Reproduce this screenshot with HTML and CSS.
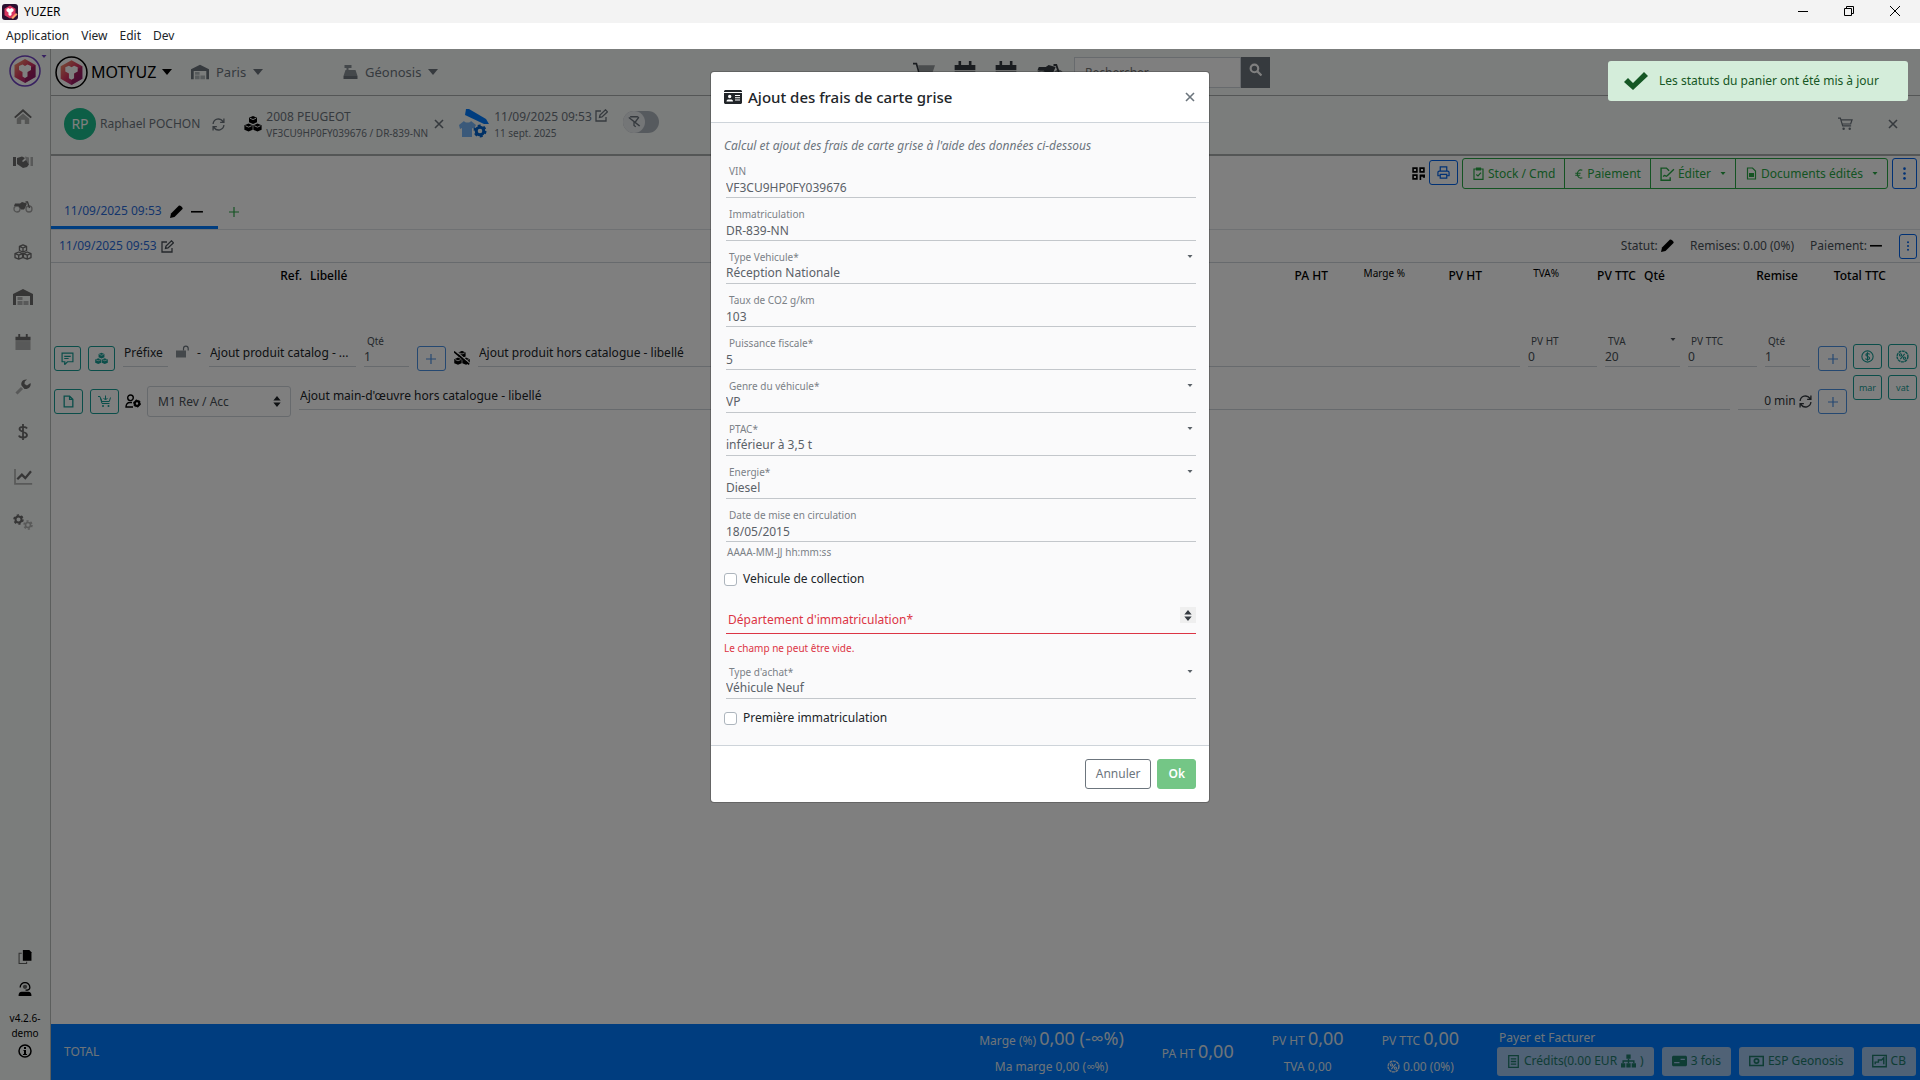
FILE: index.html
```html
<!DOCTYPE html>
<html lang="fr">

<head>
    <meta charset="UTF-8">
    <meta name="viewport" content="width=device-width, initial-scale=1.0">
    <title>YUZER</title>
    <link rel="stylesheet" href="styles.css">
</head>

<body>
    <!-- icon sprite -->
    <svg class="sprite" aria-hidden="true">
        <defs>
            <linearGradient id="hex" x1="0" y1="0" x2="1" y2="1">
                <stop offset="0" stop-color="#f9a26c" />
                <stop offset=".5" stop-color="#d8345f" />
                <stop offset="1" stop-color="#7a1fa0" />
            </linearGradient>
        </defs>
        <symbol id="i-logo" viewBox="0 0 32 32">
            <circle cx="16" cy="16" r="15" fill="#fff" stroke="currentColor" stroke-width="1.5" />
            <path d="M16 4l10.500 6v12L16 28 5.500 22v-12z" fill="url(#hex)" />
            <path d="M16 28V17l10.500-7v12z" fill="#8d1450" opacity=".6" />
            <path d="M10 11l3.500-1.500 2.500 1.500 2.500-1.500L22 11v4l-3.500 2v4.500L16 23l-2.500-1.500V17L10 15z" fill="#fff" />
        </symbol>
        <symbol id="i-app" viewBox="0 0 16 16">
            <rect width="16" height="16" rx="3" fill="#2a1030" />
            <path d="M8 1.500l5.500 3.200v6.500L8 14.500l-5.500-3.300V4.700z" fill="#d8345f" />
            <path d="M4.500 5l2-1L8 5l1.500-1 2 1v2L9.500 8.500V11L8 12l-1.500-1V8.500L4.500 7z" fill="#fff" />
            <path d="M9 14l5-5 1.500 1.500L11 15z" fill="#f9a26c" />
        </symbol>
        <symbol id="i-caret" viewBox="0 0 10 6"><path d="M0 0h10L5 6z" /></symbol>
        <symbol id="i-home" viewBox="0 0 20 18"><path d="M10 0l10 9-1.500 1.500L10 3 1.500 10.500 0 9z" /><path d="M10 5l7 6v6h-5v-5H8v5H3v-6z" opacity=".55" /></symbol>
        <symbol id="i-hands" viewBox="0 0 20 14"><path d="M0 2h3v9H0zM4 3l5-1.500 3 1.500-3 3 1 1 3-2 3 4.500-2 2.500-4 1-6-4z" /><path d="M12 1.500l4 1v7l-3-4zM17.500 2H20v9h-2.500z" opacity=".5" /></symbol>
        <symbol id="i-moto" viewBox="0 0 20 12"><g fill="none" stroke="currentColor" stroke-width="1.300"><circle cx="4" cy="8" r="3" opacity=".6" /><circle cx="16" cy="8" r="3" opacity=".6" /><path d="M12.500 1h2l2 6" /></g><path d="M2 2.500h5l2-1.500 5 1.500L12 7l-1 1.500H8L5.500 5H1z" /></symbol>
        <symbol id="i-boxes" viewBox="0 0 20 18"><g fill="none" stroke="currentColor" stroke-width="1.500" stroke-linejoin="round"><path d="M10 1l4 1.700v4.600L10 9 6 7.300V2.700zM6 2.700l4 1.800 4-1.800M10 4.500V9" /><path d="M5.200 9l4.300 1.700v4.600l-4.300 1.700L1 15.300v-4.600zM1 10.700l4.200 1.800 4.300-1.800M5.200 12.500V17" /><path d="M14.800 9l4.200 1.700v4.600L14.800 17l-4.300-1.700v-4.600zM10.500 10.700l4.300 1.800 4.200-1.800M14.800 12.500V17" /></g></symbol>
        <symbol id="i-cubes" viewBox="0 0 20 18"><path d="M10 0l4.500 2v5L10 9 5.500 7V2z" /><path d="M5 8.500l4.600 2v5L5 17.500l-4.700-2v-5z" /><path d="M15 8.500l4.700 2v5l-4.700 2-4.600-2v-5z" /><path d="M6.500 2.500L10 4l3.500-1.500M1.500 11L5 12.500 8.500 11M11.500 11l3.500 1.500 3.500-1.500" fill="none" stroke="#fff" /></symbol>
        <symbol id="i-cubes-off" viewBox="0 0 20 18"><use href="#i-cubes" width="20" height="18" /><path d="M2 0l18 16" stroke="#fff" stroke-width="1.500" /><path d="M0 1l19 16" stroke="currentColor" stroke-width="2" /></symbol>
        <symbol id="i-garage" viewBox="0 0 20 16"><path d="M0 16V5l10-5 10 5v11h-3V7H3v9z" /><path d="M4.500 8h5v3h-5zM4.500 12h5v4h-5zM10.500 12h5v4h-5z" opacity=".5" /></symbol>
        <symbol id="i-calendar" viewBox="0 0 16 17"><path d="M0 7V3h3V0h2v3h6V0h2v3h3v4z" /><path d="M0 7.500h16V17H0z" opacity=".5" /></symbol>
        <symbol id="i-wrench" viewBox="0 0 16 16"><path d="M7 9L1.500 14.500" fill="none" stroke="currentColor" stroke-width="3" opacity=".5" /><path d="M15.500 4L12 6.500 9.500 5l.3-2.500L12 .5C8 0 5.500 3 6.500 6.500L9.500 10c4 .5 7-2.500 6-6z" /></symbol>
        <symbol id="i-dollar" viewBox="0 0 12 16"><path d="M10 4.500C9 2.500 2.500 2 2.500 5S10 7.500 10 11s-7.500 3-8 .5M6 0v16" fill="none" stroke="currentColor" stroke-width="1.800" /></symbol>
        <symbol id="i-chart" viewBox="0 0 16 14"><path d="M1 0v13h15" fill="none" stroke="currentColor" stroke-width="1.500" opacity=".5" /><path d="M3 9l4-4 3 3 5-6" fill="none" stroke="currentColor" stroke-width="2" /></symbol>
        <symbol id="i-gears" viewBox="0 0 20 16"><g fill="none" stroke="currentColor"><circle cx="5.500" cy="5.500" r="3" stroke-width="2" /><circle cx="5.500" cy="5.500" r="4.500" stroke-width="1.500" stroke-dasharray="2.350" /><g opacity=".5"><circle cx="15" cy="11" r="2.500" stroke-width="1.600" /><circle cx="15" cy="11" r="4" stroke-width="1.500" stroke-dasharray="2.100" /></g></g></symbol>
        <symbol id="i-copy" viewBox="0 0 12 13"><path d="M4 0h6l2 2v8H4z" /><path d="M3 3H.5v9.500h7V11" fill="none" stroke="currentColor" opacity=".6" /></symbol>
        <symbol id="i-agent" viewBox="0 0 12 13"><circle cx="6" cy="4.500" r="2" opacity=".6" /><path d="M1.500 5a4.500 4.500 0 1 1 9 0c0 2-2 2.500-4 2.500" fill="none" stroke="currentColor" stroke-width="1.200" /><path d="M0 13c0-3 1-4 3-4h6c2 0 3 1 3 4z" /></symbol>
        <symbol id="i-info" viewBox="0 0 14 14"><circle cx="7" cy="7" r="6" fill="none" stroke="currentColor" stroke-width="1.500" /><path d="M6 3h2v2H6zM5.500 6H8v4h1v1H5v-1h1V7h-.5z" /></symbol>
        <symbol id="i-register" viewBox="0 0 14 14"><path d="M1 0h7v3H5v2h7l2 6H0l2-6h1V3H1z" opacity=".8" /><path d="M0 11h14v3H0z" /></symbol>
        <symbol id="i-cart" viewBox="0 0 16 14"><path d="M0 .8h2.500L5 9h9M3 2.500h12L13.500 7H4.500" fill="none" stroke="currentColor" stroke-width="1.300" /><circle cx="6" cy="12" r="1.300" /><circle cx="12.500" cy="12" r="1.300" /></symbol>
        <symbol id="i-cart-big" viewBox="0 0 26 22"><path d="M0 1h4l4 14h15" fill="none" stroke="currentColor" stroke-width="2" /><path d="M6 3h20l-3 9H8z" opacity=".5" /><circle cx="10" cy="19" r="2" /><circle cx="21" cy="19" r="2" /></symbol>
        <symbol id="i-refresh" viewBox="0 0 12 12"><path d="M1 5.500A5 5 0 0 1 10 3l1 1M11 6.500A5 5 0 0 1 2 9L1 8M11 .5V4H7.500M1 11.500V8h3.500" fill="none" stroke="currentColor" stroke-width="1.200" /></symbol>
        <symbol id="i-edit" viewBox="0 0 13 13"><path d="M6 2H1v10h10V8M4.500 8.500l.5-2.500L10.500.8l2 2L7 8z" fill="none" stroke="currentColor" stroke-width="1.300" /></symbol>
        <symbol id="i-pen" viewBox="0 0 13 13"><path d="M0 13l1-4.500L9 .6C10 0 13.500 3 12.500 4L4.500 12z" /></symbol>
        <symbol id="i-minus" viewBox="0 0 12 12"><path d="M0 5.500h11V7H0z" /></symbol>
        <symbol id="i-plus" viewBox="0 0 12 12"><path d="M5.300 0h1.400v5.300H12v1.400H6.700V12H5.300V6.700H0V5.300h5.300z" /></symbol>
        <symbol id="i-x" viewBox="0 0 10 10"><path d="M1 1l8 8M9 1L1 9" fill="none" stroke="currentColor" stroke-width="1.600" /></symbol>
        <symbol id="i-work" viewBox="0 0 32 30"><path d="M1 16l5-4c1 2 6 2 7 0l5 4-2 4-2-1v9H4v-9l-2 1z" fill="#74b3f5" /><path d="M8 0l3 0 17 10 3 5-5 0L7 6z" fill="#007bff" /><circle cx="22" cy="22" r="3.800" fill="none" stroke="#0062cc" stroke-width="3" /><circle cx="22" cy="22" r="5.500" fill="none" stroke="#0062cc" stroke-width="2" stroke-dasharray="2.880" /></symbol>
        <symbol id="i-filter-off" viewBox="0 0 16 14"><path d="M1 1l14 11M3.500 1H14L9.500 7M8 7v4l2 1.500" fill="none" stroke="currentColor" stroke-width="1.500" /></symbol>
        <symbol id="i-search" viewBox="0 0 12 12"><circle cx="5" cy="5" r="3.500" fill="none" stroke="currentColor" stroke-width="2" /><path d="M7.500 7.500l4 4" stroke="currentColor" stroke-width="2" /></symbol>
        <symbol id="i-check" viewBox="0 0 24 18"><path d="M0 10l4-4 5 5L20 0l4 4L9 18z" /></symbol>
        <symbol id="i-qr" viewBox="0 0 12 12"><path d="M1 1h3.500v3.500H1zM7.500 1H11v3.500H7.500zM1 7.500h3.500V11H1z" fill="none" stroke="currentColor" stroke-width="1.500" /><path d="M7 7h5v3h-2v-1H8.500v3H7z" /></symbol>
        <symbol id="i-print" viewBox="0 0 14 14"><path d="M3.500 5V1h7v4M3.500 10.500H1V7c0-1 .5-1.500 1.500-1.500h9c1 0 1.500.5 1.500 1.500v3.500h-2.500M3.500 9h7v4h-7z" fill="none" stroke="currentColor" stroke-width="1.300" /></symbol>
        <symbol id="i-clip" viewBox="0 0 11 13"><path d="M1 2h9v10.300H1zM3.500 1h4v2h-4zM3.300 7.500L5 9l3-3.300" fill="none" stroke="currentColor" stroke-width="1.200" /></symbol>
        <symbol id="i-euro" viewBox="0 0 9 12"><path d="M8.500 1.500C5 0 2.500 2.500 2.500 6s2.500 6 6 4.500M0 5h6.500M0 7.500h6" fill="none" stroke="currentColor" stroke-width="1.300" /></symbol>
        <symbol id="i-sign" viewBox="0 0 14 13"><path d="M9.500 9.500v2.800H1V1h5l2.500 2.500M3 9c2-3 2 1 4-1l6-6" fill="none" stroke="currentColor" stroke-width="1.300" /></symbol>
        <symbol id="i-doc" viewBox="0 0 10 13"><path d="M1 1h5l3 3v8H1z" fill="none" stroke="currentColor" stroke-width="1.200" /><path d="M2.500 6h5v4h-5z" /></symbol>
        <symbol id="i-dots" viewBox="0 0 4 12"><circle cx="2" cy="1.500" r="1.200" /><circle cx="2" cy="6" r="1.200" /><circle cx="2" cy="10.500" r="1.200" /></symbol>
        <symbol id="i-note" viewBox="0 0 12 12"><path d="M1 1h10v8H6l-2.500 2.500V9H1zM3 4h6M3 6h4" fill="none" stroke="currentColor" stroke-width="1.100" /></symbol>
        <symbol id="i-lock" viewBox="0 0 13 12"><path d="M0 5h10v7H0z" opacity=".8" /><path d="M7.500 5V3a2.300 2.300 0 0 1 4.700 0v2" fill="none" stroke="currentColor" stroke-width="1.200" /></symbol>
        <symbol id="i-file" viewBox="0 0 10 12"><path d="M1 1h5l3 3v7H1zM6 1v3h3" fill="none" stroke="currentColor" stroke-width="1.200" /></symbol>
        <symbol id="i-cart-plus" viewBox="0 0 13 12"><path d="M0 1h2l2 7h7.500M3 3l.7 3h7.600L12.500 2M7.500 0v4M5.500 2.500l2 2 2-2" fill="none" stroke="currentColor" /><circle cx="5" cy="10.500" r="1" /><circle cx="10.500" cy="10.500" r="1" /></symbol>
        <symbol id="i-user" viewBox="0 0 16 14"><circle cx="5.500" cy="3.800" r="2.800" fill="none" stroke="currentColor" stroke-width="1.400" /><path d="M8 13H1c0-3 1.500-4.500 4-4.500h2" fill="none" stroke="currentColor" stroke-width="1.400" /><circle cx="12" cy="9.500" r="2.300" fill="none" stroke="currentColor" stroke-width="2.200" /><circle cx="12" cy="9.500" r="3.500" fill="none" stroke="currentColor" stroke-dasharray="1.800" /></symbol>
        <symbol id="i-sort" viewBox="0 0 8 12"><path d="M4 0l4 5H0zM0 7h8l-4 5z" /></symbol>
        <symbol id="i-coin" viewBox="0 0 12 12"><circle cx="6" cy="6" r="5.200" fill="none" stroke="currentColor" /><path d="M8 4C7 3 4.500 3 4.500 4.500S8 6 8 7.500 5 9 4 8M6 2v8" fill="none" stroke="currentColor" /></symbol>
        <symbol id="i-badge" viewBox="0 0 12 12"><circle cx="6" cy="6" r="5" fill="none" stroke="currentColor" stroke-width="1.300" stroke-dasharray="2.600 .6" /><path d="M4 8.500l4-5" stroke="currentColor" /><circle cx="4.200" cy="4.500" r="1" fill="none" stroke="currentColor" /><circle cx="7.800" cy="7.500" r="1" fill="none" stroke="currentColor" /></symbol>
        <symbol id="i-bill" viewBox="0 0 10 12"><path d="M.6.6h8.800v10.800H.6zM2.500 3.500h5M2.500 6h5M2.500 8.500h5" fill="none" stroke="currentColor" stroke-width="1.200" /></symbol>
        <symbol id="i-tree" viewBox="0 0 14 12"><path d="M5 0h4v4H5zM0 8h4v4H0zM5 8h4v4H5zM10 8h4v4h-4z" /><path d="M7 4v4M2 8V6h10v2" fill="none" stroke="currentColor" stroke-width="1.300" /></symbol>
        <symbol id="i-card" viewBox="0 0 14 10"><path fill-rule="evenodd" d="M1 0h12l1 1v8l-1 1H1L0 9V1zM8 3v1h4V3zM2 6v1h5V6z" /></symbol>
        <symbol id="i-cash" viewBox="0 0 14 10"><path d="M.7.7h12.600v8.600H.7z" fill="none" stroke="currentColor" stroke-width="1.400" /><circle cx="7" cy="5" r="2" fill="none" stroke="currentColor" stroke-width="1.600" /></symbol>
        <symbol id="i-cb" viewBox="0 0 14 12"><path d="M.7.7h12.600v10.600H.7zM3 9V7h3V5h3l2-2v6" fill="none" stroke="currentColor" stroke-width="1.300" /></symbol>
        <symbol id="i-id" viewBox="0 0 18 14"><path fill-rule="evenodd" d="M1 0h16l1 1v1H0V1zM0 3h18v10l-1 1H1l-1-1zM4 6.500a1.700 1.700 0 1 0 3.400 0 1.700 1.700 0 0 0-3.400 0zM2.500 11.500h6.500c0-1.500-1-2-2-2H4.500c-1 0-2 .5-2 2zM11 5v1h5V5zM11 7.300v1h5v-1zM11 9.500v1h5v-1z" /></symbol>
    </svg>

    <div class="titlebar">
        <svg class="app-icon"><use href="#i-app" /></svg>
        <span>YUZER</span>
        <div class="win-buttons">
            <button aria-label="Réduire"><svg viewBox="0 0 10 10"><path d="M0 5.500h10" /></svg></button>
            <button aria-label="Restaurer"><svg viewBox="0 0 10 10"><path d="M.5 2.500h7v7h-7zM2.500 2.500v-2h7v7h-2" /></svg></button>
            <button aria-label="Fermer"><svg viewBox="0 0 10 10"><path d="M0 0l10 10M10 0L0 10" /></svg></button>
        </div>
    </div>
    <nav class="menubar">
        <a href="#">Application</a>
        <a href="#">View</a>
        <a href="#">Edit</a>
        <a href="#">Dev</a>
    </nav>

    <div class="app">
        <aside class="sidebar">
            <a href="#" class="side-logo"><svg><use href="#i-logo" /></svg><svg class="caret tiny"><use href="#i-caret" /></svg></a>
            <nav>
                <a href="#" aria-label="Accueil"><svg><use href="#i-home" /></svg></a>
                <a href="#" aria-label="Clients"><svg><use href="#i-hands" /></svg></a>
                <a href="#" aria-label="Véhicules"><svg><use href="#i-moto" /></svg></a>
                <a href="#" aria-label="Produits"><svg><use href="#i-boxes" /></svg></a>
                <a href="#" aria-label="Stock"><svg><use href="#i-garage" /></svg></a>
                <a href="#" aria-label="Agenda"><svg><use href="#i-calendar" /></svg></a>
                <a href="#" aria-label="Atelier"><svg><use href="#i-wrench" /></svg></a>
                <a href="#" aria-label="Ventes"><svg><use href="#i-dollar" /></svg></a>
                <a href="#" aria-label="Statistiques"><svg><use href="#i-chart" /></svg></a>
                <a href="#" aria-label="Réglages"><svg><use href="#i-gears" /></svg></a>
            </nav>
            <div class="side-bottom">
                <svg><use href="#i-copy" /></svg>
                <svg><use href="#i-agent" /></svg>
                <span>v4.2.6-demo</span>
                <svg><use href="#i-info" /></svg>
            </div>
        </aside>

        <div class="main">
            <header class="topbar">
                <a href="#" class="brand"><svg class="logo"><use href="#i-logo" /></svg>MOTYUZ<svg class="caret"><use href="#i-caret" /></svg></a>
                <a href="#" class="place"><svg class="ic-l"><use href="#i-garage" /></svg>Paris<svg class="caret"><use href="#i-caret" /></svg></a>
                <a href="#" class="till"><svg class="ic-m"><use href="#i-register" /></svg>Géonosis<svg class="caret"><use href="#i-caret" /></svg></a>
                <div class="quick">
                    <svg><use href="#i-cart-big" /></svg>
                    <svg><use href="#i-calendar" /></svg>
                    <svg><use href="#i-calendar" /></svg>
                    <svg class="wide"><use href="#i-moto" /></svg>
                </div>
                <form class="search">
                    <input type="text" aria-label="Rechercher" placeholder="Rechercher">
                    <button type="button" aria-label="Rechercher"><svg class="ic"><use href="#i-search" /></svg></button>
                </form>
                <svg class="account"><use href="#i-info" /></svg>
            </header>

            <section class="context">
                <span class="avatar">RP</span>
                <span class="client">Raphael POCHON</span>
                <svg class="ic refresh"><use href="#i-refresh" /></svg>
                <svg class="ic-l black"><use href="#i-cubes" /></svg>
                <div class="stack">
                    <span>2008 PEUGEOT</span>
                    <small>VF3CU9HP0FY039676 / DR-839-NN</small>
                </div>
                <button class="plain vehicle-x" aria-label="Retirer le véhicule"><svg class="ic-s"><use href="#i-x" /></svg></button>
                <svg class="work"><use href="#i-work" /></svg>
                <div class="stack">
                    <span>11/09/2025 09:53 <svg class="ic"><use href="#i-edit" /></svg></span>
                    <small>11 sept. 2025</small>
                </div>
                <label class="switch"><input type="checkbox" aria-label="Filtrer"><span><svg class="ic"><use href="#i-filter-off" /></svg></span></label>
                <div class="context-end">
                    <button class="plain" aria-label="Panier"><svg class="ic-m"><use href="#i-cart" /></svg></button>
                    <button class="plain" aria-label="Fermer"><svg class="ic-s"><use href="#i-x" /></svg></button>
                </div>
            </section>

            <section class="tabs">
                <div class="tab active"><a href="#">11/09/2025 09:53</a><svg class="ic"><use href="#i-pen" /></svg><svg class="ic"><use href="#i-minus" /></svg></div>
                <button class="plain add-tab" aria-label="Ajouter"><svg class="ic-s"><use href="#i-plus" /></svg></button>
                <div class="tools">
                    <svg class="ic black"><use href="#i-qr" /></svg>
                    <button class="btn-line blue small" aria-label="Imprimer"><svg class="ic"><use href="#i-print" /></svg></button>
                    <div class="group">
                        <button><svg class="ic"><use href="#i-clip" /></svg>Stock / Cmd</button>
                        <button><svg class="ic-s"><use href="#i-euro" /></svg>Paiement</button>
                        <button><svg class="ic-m"><use href="#i-sign" /></svg>Éditer<svg class="caret tiny"><use href="#i-caret" /></svg></button>
                        <button><svg class="ic"><use href="#i-doc" /></svg>Documents édités<svg class="caret tiny"><use href="#i-caret" /></svg></button>
                    </div>
                    <button class="btn-line blue tall" aria-label="Plus"><svg class="ic"><use href="#i-dots" /></svg></button>
                </div>
            </section>

            <section class="docbar">
                <a href="#">11/09/2025 09:53</a>
                <svg class="ic"><use href="#i-edit" /></svg>
                <div class="doc-state">
                    <span>Statut: <svg class="ic black"><use href="#i-pen" /></svg></span>
                    <span>Remises: 0.00 (0%)</span>
                    <span>Paiement: <svg class="ic black"><use href="#i-minus" /></svg></span>
                    <button class="btn-line blue narrow" aria-label="Plus"><svg class="ic-s"><use href="#i-dots" /></svg></button>
                </div>
            </section>

            <table class="lines-head">
                <colgroup>
                    <col class="c-ref"><col><col class="c-num"><col class="c-num"><col class="c-num"><col class="c-num"><col class="c-num"><col class="c-qty"><col class="c-num"><col class="c-total"><col class="c-end">
                </colgroup>
                <thead>
                    <tr>
                        <th>Ref.</th>
                        <th class="left">Libellé</th>
                        <th>PA HT</th>
                        <th class="mini">Marge %</th>
                        <th>PV HT</th>
                        <th class="mini">TVA%</th>
                        <th>PV TTC</th>
                        <th class="left">Qté</th>
                        <th>Remise</th>
                        <th>Total TTC</th>
                        <th></th>
                    </tr>
                </thead>
            </table>

            <section class="lines">
                <div class="rows">
                    <div class="row">
                        <button class="btn-line teal slim" aria-label="Commentaire"><svg class="ic"><use href="#i-note" /></svg></button>
                        <button class="btn-line teal slim" aria-label="Lot"><svg class="ic"><use href="#i-cubes" /></svg></button>
                        <input class="cell prefix" type="text" aria-label="Préfixe" placeholder="Préfixe">
                        <svg class="ic lock"><use href="#i-lock" /></svg>
                        <span class="dash">-</span>
                        <input class="cell catalog" type="text" aria-label="Ajout produit catalogue" placeholder="Ajout produit catalog - ...">
                        <div class="mini-field w-s"><label for="q1">Qté</label><input id="q1" type="text" value="1"></div>
                        <button class="btn-line sky" aria-label="Ajouter"><svg class="ic-s"><use href="#i-plus" /></svg></button>
                        <svg class="ic-l black"><use href="#i-cubes-off" /></svg>
                        <input class="cell grow" type="text" aria-label="Libellé produit" placeholder="Ajout produit hors catalogue - libellé">
                        <div class="mini-field w-m"><label for="pvht">PV HT</label><input id="pvht" type="text" value="0"></div>
                        <div class="mini-field w-l"><label for="tva">TVA</label><select id="tva"><option>20</option></select><svg class="caret tiny"><use href="#i-caret" /></svg></div>
                        <div class="mini-field w-m"><label for="pvttc">PV TTC</label><input id="pvttc" type="text" value="0"></div>
                        <div class="mini-field w-s"><label for="q2">Qté</label><input id="q2" type="text" value="1"></div>
                        <button class="btn-line sky" aria-label="Ajouter"><svg class="ic-s"><use href="#i-plus" /></svg></button>
                    </div>
                    <div class="row">
                        <button class="btn-line teal" aria-label="Document"><svg class="ic"><use href="#i-file" /></svg></button>
                        <button class="btn-line teal" aria-label="Panier"><svg class="ic"><use href="#i-cart-plus" /></svg></button>
                        <svg class="ic-l black user"><use href="#i-user" /></svg>
                        <div class="rate"><select aria-label="Taux"><option>M1 Rev / Acc</option></select><svg><use href="#i-sort" /></svg></div>
                        <input class="cell grow" type="text" aria-label="Libellé main-d'œuvre" placeholder="Ajout main-d'œuvre hors catalogue - libellé">
                        <div class="minutes"><input class="cell" type="text" aria-label="Durée" value="0"><span>min</span><svg class="ic"><use href="#i-refresh" /></svg></div>
                        <button class="btn-line sky" aria-label="Ajouter"><svg class="ic-s"><use href="#i-plus" /></svg></button>
                    </div>
                </div>
                <div class="extras">
                    <button class="btn-line teal" aria-label="Prix"><svg class="ic"><use href="#i-coin" /></svg></button>
                    <button class="btn-line teal" aria-label="Remise"><svg class="ic"><use href="#i-badge" /></svg></button>
                    <button class="btn-line teal">mar</button>
                    <button class="btn-line teal">vat</button>
                </div>
            </section>

            <footer class="totals">
                <span class="total-name">TOTAL</span>
                <div class="sum"><p>Marge (%) <b>0,00 (-∞%)</b></p><p>Ma marge 0,00 (∞%)</p></div>
                <div class="sum"><p>PA HT <b>0,00</b></p></div>
                <div class="sum"><p>PV HT <b>0,00</b></p><p>TVA 0,00</p></div>
                <div class="sum"><p>PV TTC <b>0,00</b></p><p><svg class="ic"><use href="#i-badge" /></svg> 0.00 (0%)</p></div>
                <div class="pay">
                    <span>Payer et Facturer</span>
                    <div class="pay-buttons">
                        <button><svg class="ic"><use href="#i-bill" /></svg>Crédits(0.00 EUR <svg class="ic-m"><use href="#i-tree" /></svg>)</button>
                        <button><svg class="ic-m"><use href="#i-card" /></svg>3 fois</button>
                        <button><svg class="ic-m"><use href="#i-cash" /></svg>ESP Geonosis</button>
                        <button><svg class="ic-m"><use href="#i-cb" /></svg>CB</button>
                    </div>
                </div>
            </footer>
        </div>

        <div class="backdrop">
            <form class="modal" role="dialog" aria-labelledby="modal-title">
                <div class="modal-header">
                    <svg class="ic-l"><use href="#i-id" /></svg>
                    <h5 id="modal-title">Ajout des frais de carte grise</h5>
                    <button type="button" class="plain" aria-label="Fermer"><svg class="ic-s"><use href="#i-x" /></svg></button>
                </div>
                <div class="modal-body">
                    <p class="intro">Calcul et ajout des frais de carte grise à l'aide des données ci-dessous</p>
                    <div class="field"><label for="vin">VIN</label><input id="vin" type="text" value="VF3CU9HP0FY039676"></div>
                    <div class="field"><label for="immat">Immatriculation</label><input id="immat" type="text" value="DR-839-NN"></div>
                    <div class="field"><label for="type">Type Vehicule*</label><select id="type"><option>Réception Nationale</option></select><svg class="caret tiny"><use href="#i-caret" /></svg></div>
                    <div class="field"><label for="co2">Taux de CO2 g/km</label><input id="co2" type="text" value="103"></div>
                    <div class="field"><label for="cv">Puissance fiscale*</label><input id="cv" type="text" value="5"></div>
                    <div class="field"><label for="genre">Genre du véhicule*</label><select id="genre"><option>VP</option></select><svg class="caret tiny"><use href="#i-caret" /></svg></div>
                    <div class="field"><label for="ptac">PTAC*</label><select id="ptac"><option>inférieur à 3,5 t</option></select><svg class="caret tiny"><use href="#i-caret" /></svg></div>
                    <div class="field"><label for="energie">Energie*</label><select id="energie"><option>Diesel</option></select><svg class="caret tiny"><use href="#i-caret" /></svg></div>
                    <div class="field"><label for="date">Date de mise en circulation</label><input id="date" type="text" value="18/05/2015"></div>
                    <p class="help">AAAA-MM-JJ hh:mm:ss</p>
                    <label class="check"><input type="checkbox">Vehicule de collection</label>
                    <div class="field invalid"><label for="dep">Département d'immatriculation*</label><input id="dep" type="number"><span class="spin"><svg><use href="#i-sort" /></svg></span></div>
                    <p class="error">Le champ ne peut être vide.</p>
                    <div class="field"><label for="achat">Type d'achat*</label><select id="achat"><option>Véhicule Neuf</option></select><svg class="caret tiny"><use href="#i-caret" /></svg></div>
                    <label class="check"><input type="checkbox">Première immatriculation</label>
                </div>
                <div class="modal-footer">
                    <button type="button" class="cancel">Annuler</button>
                    <button type="button" class="ok">Ok</button>
                </div>
            </form>
        </div>
        <div class="toast" role="status"><svg><use href="#i-check" /></svg>Les statuts du panier ont été mis à jour</div>
    </div>
</body>

</html>
```
FILE: styles.css
```css
* {
    box-sizing: border-box;
}

body {
    margin: 0;
    height: 100vh;
    display: flex;
    flex-direction: column;
    font-family: "Segoe UI", "Noto Sans", "Open Sans", sans-serif;
    font-size: 12px;
    line-height: 18px;
    color: #212529;
    background: #fff;
    overflow: hidden;
}

a {
    color: inherit;
    text-decoration: none;
}

p, h5 {
    margin: 0;
}

button, input, select {
    font: inherit;
    color: inherit;
    margin: 0;
    padding: 0;
    outline: none;
}

button {
    cursor: pointer;
}

select {
    appearance: none;
}

svg {
    fill: currentColor;
    flex: none;
}

.sprite {
    position: absolute;
    width: 0;
    height: 0;
}

.ic-s { width: 10px; height: 10px; }
.ic { width: 13px; height: 13px; }
.ic-m { width: 15px; height: 14px; }
.ic-l { width: 18px; height: 16px; }
.black { color: #000; }

.caret {
    width: 10px;
    height: 6px;
}

.caret.tiny {
    width: 6px;
    height: 3px;
}

.plain {
    border: 0;
    background: none;
    display: flex;
}

/* window frame */
.titlebar {
    height: 23px;
    flex: none;
    display: flex;
    align-items: center;
    gap: 6px;
    padding-left: 2px;
    background: #f3f3f3;
    color: #000;
}

.app-icon {
    width: 16px;
    height: 16px;
}

.win-buttons {
    display: flex;
    margin-left: auto;
    padding-right: 2px;
}

.win-buttons button {
    width: 46px;
    height: 20px;
    border: 0;
    background: none;
}

.win-buttons svg {
    width: 10px;
    height: 10px;
    fill: none;
    stroke: #000;
}

.menubar {
    height: 26px;
    flex: none;
    display: flex;
    align-items: center;
    gap: 12px;
    padding-left: 6px;
}

.app {
    position: relative;
    flex: 1;
    min-height: 0;
    display: flex;
}

/* left menu */
.sidebar {
    width: 51px;
    display: flex;
    flex-direction: column;
    background: #f7faf8;
    border-right: 1px solid #b8bcba;
    color: #6c6c6c;
}

.side-logo {
    display: flex;
    padding: 6px 0 0 9px;
    height: 45px;
    color: #6f42c1;
}

.side-logo svg:first-child {
    width: 32px;
    height: 32px;
}

.sidebar nav a {
    display: flex;
    justify-content: center;
    align-items: center;
    width: 46px;
    height: 45px;
}

.sidebar nav svg {
    width: 20px;
    height: 16px;
}

.side-bottom {
    margin-top: auto;
    display: flex;
    flex-direction: column;
    align-items: center;
    color: #000;
    font-size: 10px;
    line-height: 15px;
    text-align: center;
    padding: 0 4px 22px;
}

.side-bottom svg {
    width: 14px;
    height: 14px;
}

.side-bottom svg + svg {
    margin: 18px 0 15px;
}

.side-bottom span + svg {
    margin-top: 3px;
}

.main {
    flex: 1;
    min-width: 0;
    display: flex;
    flex-direction: column;
}

/* header */
.topbar {
    height: 46px;
    flex: none;
    display: flex;
    align-items: center;
    background: #f7faf8;
    color: #6c757d;
}

.topbar a {
    display: flex;
    align-items: center;
    gap: 7px;
}

.topbar .brand {
    gap: 3px;
    padding-left: 4px;
    font-size: 16px;
    color: #000;
    width: 140px;
}

.brand .caret {
    margin-left: 3px;
}

.logo {
    width: 33px;
    height: 33px;
}

.topbar .place, .topbar .till {
    font-size: 13px;
    width: 152px;
}

.topbar .till {
    width: 570px;
}

.quick {
    display: flex;
    gap: 19px;
    color: #343a40;
    width: 161px;
}

.quick svg {
    width: 22px;
    height: 22px;
}

.quick .wide {
    width: 28px;
}

.search {
    display: flex;
    width: 196px;
}

.search input {
    width: 100%;
    height: 31px;
    padding: 0 10px;
    border: 1px solid #ced4da;
    background: #fff;
}

.search button {
    width: 29px;
    flex: none;
    border: 0;
    background: #6c757d;
    color: #fff;
}

.account {
    width: 16px;
    height: 34px;
    margin: 0 149px 0 auto;
    color: #000;
}

/* current client / vehicle */
.context {
    height: 61px;
    flex: none;
    display: flex;
    align-items: center;
    padding: 0 22px 2px 13px;
    background: #f7faf8;
    border: solid #a9adac;
    border-width: 1px 0 2px;
    color: #6c757d;
}

.avatar {
    width: 32px;
    height: 32px;
    border-radius: 50%;
    background: #1abc8c;
    color: #fff;
    font-size: 14px;
    line-height: 32px;
    text-align: center;
    margin-right: 4px;
}

.refresh {
    margin: 0 19px 0 12px;
}

.stack {
    display: flex;
    flex-direction: column;
    margin-left: 4px;
}

.stack small {
    font-size: 10px;
    line-height: 14px;
}

.stack .ic {
    vertical-align: -1px;
}

.vehicle-x {
    margin: 0 14px 0 6px;
}

.work {
    width: 32px;
    height: 30px;
}

.switch {
    margin: 0 0 4px 15px;
}

.switch input {
    position: absolute;
    opacity: 0;
}

.switch span {
    display: block;
    width: 36px;
    height: 22px;
    border-radius: 11px;
    background: #adb5bd;
}

.switch svg {
    width: 22px;
    height: 22px;
    padding: 4px;
    border-radius: 50%;
    background: #e9ecef;
}

.context-end {
    display: flex;
    align-items: center;
    gap: 35px;
    margin-left: auto;
}

.tabs {
    height: 74px;
    flex: none;
    display: flex;
    align-items: flex-end;
    border-bottom: 1px solid #dee2e6;
}

.tab {
    display: flex;
    align-items: center;
    gap: 8px;
    width: 167px;
    height: 36px;
    padding: 3px 0 0 13px;
    border-bottom: 3px solid #007bff;
    color: #000;
}

.tab a, .docbar a {
    color: #2a6bd8;
}

.add-tab {
    margin: 0 0 12px 11px;
    color: #28a745;
}

.tools {
    display: flex;
    align-items: center;
    gap: 4px;
    margin: 0 3px auto auto;
    padding-top: 2px;
}

.tools .small {
    margin-bottom: 2px;
}

.group {
    display: flex;
}

.group button {
    display: flex;
    align-items: center;
    gap: 3px;
    height: 31px;
    padding: 0 9px;
    border: 1px solid #28a745;
    background: none;
    color: #28a745;
    white-space: nowrap;
}

.group button + button {
    margin-left: -1px;
}

.group button:first-child {
    border-radius: 3px 0 0 3px;
}

.group button:last-child {
    border-radius: 0 3px 3px 0;
}

.group .tiny {
    margin-left: 6px;
}

.btn-line {
    width: 29px;
    height: 25px;
    flex: none;
    display: flex;
    align-items: center;
    justify-content: center;
    border: 1px solid;
    border-radius: 3px;
    background: none;
    font-size: 9px;
}

.blue { color: #0062ea; }
.sky { color: #4a90e2; }
.teal { color: #179c94; }

.btn-line.tall {
    width: 25px;
    height: 31px;
}

.btn-line.narrow {
    width: 18px;
}

.btn-line.slim {
    width: 27px;
}

.docbar {
    height: 33px;
    flex: none;
    display: flex;
    align-items: center;
    gap: 4px;
    padding: 0 3px 0 8px;
    border-bottom: 1px solid #ced4da;
    color: #495057;
}

.doc-state {
    display: flex;
    align-items: center;
    gap: 16px;
    margin-left: auto;
}

.doc-state .ic {
    vertical-align: -2px;
}

.lines-head {
    width: 100%;
    table-layout: fixed;
    border-collapse: collapse;
    color: #000;
}

.c-ref { width: 255px; }
.c-num { width: 77px; }
.c-qty { width: 85px; }
.c-total { width: 88px; }
.c-end { width: 30px; }

.lines-head th {
    height: 66px;
    padding: 4px;
    vertical-align: top;
    text-align: right;
    font-weight: 500;
}

.lines-head .left {
    text-align: left;
}

.lines-head .mini {
    font-size: 10px;
    line-height: 12px;
    font-weight: 400;
}

/* product and labour lines */
.lines {
    flex: 1;
    display: flex;
    align-items: flex-start;
    gap: 6px;
    padding: 4px 3px 0;
}

.rows {
    flex: 1;
    min-width: 0;
}

.row {
    display: flex;
    align-items: flex-end;
    gap: 8px;
    height: 38px;
}

.row + .row {
    height: 43px;
}

.row .btn-line.teal:first-child {
    margin-right: -1px;
}

.row svg.ic-l {
    margin-bottom: 5px;
    width: 16px;
}

.row svg.user {
    margin: 0 -2px 5px;
}

.cell {
    width: 45px;
    height: 24px;
    margin-bottom: 4px;
    padding: 0 0 4px 1px;
    border: 0;
    border-bottom: 1px solid #ced4da;
    background: none;
}

.cell::placeholder {
    color: #212529;
}

.cell.catalog {
    width: 147px;
}

.cell.grow {
    flex: 1;
}

.lock {
    margin-bottom: 13px;
    color: #6c757d;
}

.dash {
    margin-bottom: 9px;
}

.mini-field {
    position: relative;
    height: 33px;
    margin-bottom: 4px;
    color: #495057;
}

.mini-field label {
    display: block;
    font-size: 10px;
    line-height: 14px;
    padding-left: 3px;
}

.mini-field input, .mini-field select {
    display: block;
    width: 100%;
    height: 19px;
    padding-bottom: 1px;
    border: 0;
    border-bottom: 1px solid #ced4da;
    background: none;
}

.mini-field .tiny {
    position: absolute;
    top: 4px;
    right: 4px;
}

.w-s { width: 45px; }
.w-m { width: 69px; }
.w-l { width: 75px; }

.rate {
    position: relative;
    width: 144px;
    margin-bottom: -3px;
}

.rate select {
    width: 100%;
    height: 31px;
    padding: 0 10px;
    border: 1px solid #ced4da;
    border-radius: 3px;
    background: none;
    color: #495057;
}

.rate svg {
    position: absolute;
    top: 10px;
    right: 10px;
    width: 8px;
    height: 11px;
}

.minutes {
    display: flex;
    align-items: flex-end;
    gap: 3px;
    width: 72px;
    margin-bottom: 4px;
    color: #343a40;
}

.minutes .cell {
    width: 33px;
    height: 18px;
    flex: none;
    margin: 0;
    padding: 0;
    text-align: right;
}

.minutes .ic {
    margin-bottom: 2px;
}

.extras {
    display: grid;
    grid-template-columns: 29px 29px;
    gap: 6px;
    padding-top: 11px;
}

/* bottom bar */
.totals {
    height: 56px;
    flex: none;
    display: flex;
    align-items: center;
    gap: 38px;
    padding: 0 4px 0 13px;
    background: #007bff;
    color: #dfe8f2;
    text-align: center;
}

.total-name {
    margin-right: auto;
}

.sum p {
    line-height: 26px;
}

.sum b {
    font-size: 18px;
    font-weight: 400;
}

.sum .ic {
    vertical-align: -2px;
}

.pay {
    text-align: left;
    white-space: nowrap;
}

.pay-buttons {
    display: flex;
    gap: 8px;
}

.pay > span {
    display: block;
    padding-left: 2px;
}

.pay button {
    display: flex;
    align-items: center;
    gap: 4px;
    height: 29px;
    padding: 0 10px;
    border: 0;
    border-radius: 3px;
    background: #a0c4ec;
    color: #1f7a6a;
}

/* dialog */
.backdrop {
    position: absolute;
    inset: 0;
    display: flex;
    justify-content: center;
    align-items: flex-start;
    padding-top: 22px;
    background: rgba(0, 0, 0, 0.5);
}

.modal {
    width: 500px;
    border: 1px solid rgba(0, 0, 0, 0.2);
    border-radius: 4px;
    background: #fff;
    background-clip: padding-box;
    overflow: hidden;
}

.modal-header {
    display: flex;
    align-items: center;
    gap: 6px;
    height: 51px;
    padding: 0 14px 0 13px;
    border-bottom: 1px solid #ced4da;
}

.modal-header h5 {
    font-size: 15px;
    font-weight: 500;
}

.modal-header button {
    margin-left: auto;
    color: #6c757d;
}

.modal-body {
    padding: 14px 13px 18px;
    background: #fafafb;
    color: #5a6168;
}

.intro {
    font-style: italic;
    color: #6c757d;
}

.field {
    position: relative;
    height: 43px;
    padding: 9px 0 0 2px;
}

.field label {
    display: block;
    padding-left: 3px;
    font-size: 10px;
    line-height: 14px;
    color: #7b8187;
}

.field input, .field select {
    display: block;
    width: 100%;
    height: 20px;
    padding-bottom: 1px;
    border: 0;
    border-bottom: 1px solid #c3c7cb;
    border-radius: 0;
    background: none;
}

.field .tiny {
    position: absolute;
    top: 14px;
    right: 3px;
}

.help {
    font-size: 10px;
    line-height: 14px;
    padding: 3px 0 11px 3px;
    color: #7b8187;
}

.check {
    display: flex;
    align-items: center;
    gap: 6px;
    color: #212529;
}

.check input {
    appearance: none;
    width: 13px;
    height: 13px;
    border: 1px solid #adb5bd;
    border-radius: 3px;
    background: #fff;
}

.field.invalid {
    height: 46px;
    padding-top: 16px;
}

/* label stays over the empty input */
.invalid label {
    position: absolute;
    top: 23px;
    padding-left: 2px;
    font-size: 12px;
    line-height: 18px;
    color: #dc3545;
}

.invalid input {
    height: 30px;
    border-color: #dc3545;
    appearance: textfield;
}

.spin {
    position: absolute;
    top: 19px;
    right: 0;
    width: 16px;
    height: 16px;
    display: flex;
    align-items: center;
    justify-content: center;
    background: #efefef;
    color: #343a40;
}

.spin svg {
    width: 8px;
    height: 11px;
}

.error {
    font-size: 10px;
    line-height: 14px;
    padding: 7px 0 1px;
    color: #dc3545;
}

.error + .field {
    margin-bottom: 10px;
}

.modal-footer {
    display: flex;
    justify-content: flex-end;
    gap: 6px;
    padding: 13px;
    border-top: 1px solid #ced4da;
}

.modal-footer button {
    height: 30px;
    padding: 0 10px;
    border: 1px solid #6c757d;
    border-radius: 3px;
    background: #fff;
    color: #6c757d;
}

.modal-footer .ok {
    border-color: #74c686;
    background: #74c686;
    color: #fff;
    font-weight: 600;
}

.toast {
    position: absolute;
    top: 12px;
    right: 12px;
    width: 300px;
    height: 40px;
    display: flex;
    align-items: center;
    gap: 11px;
    padding-left: 16px;
    border-radius: 3px;
    background: #d4edda;
    color: #155724;
    white-space: nowrap;
}

.toast svg {
    width: 24px;
    height: 18px;
}
```
